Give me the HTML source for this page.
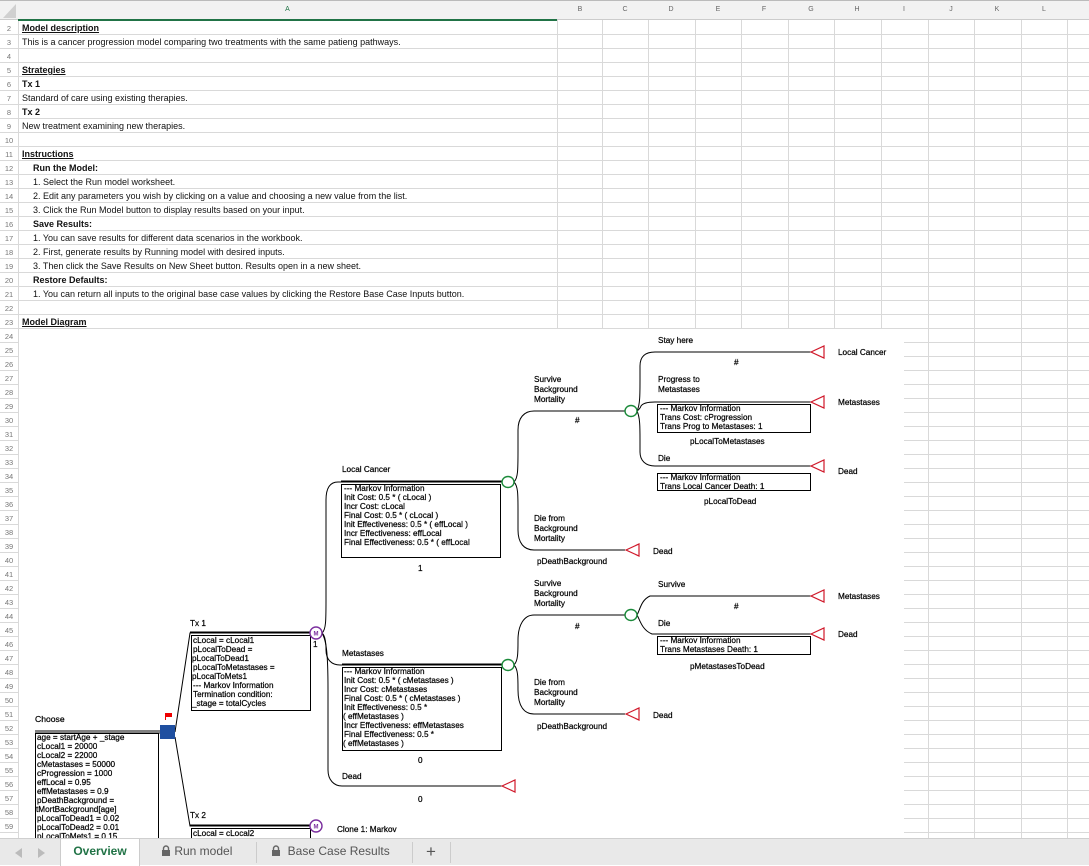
<!DOCTYPE html>
<html><head><meta charset="utf-8"><style>
*{margin:0;padding:0;box-sizing:border-box}
body{width:1089px;height:865px;overflow:hidden;background:#fff;position:relative;font-family:"Liberation Sans",sans-serif}
.grid{position:absolute;left:0;top:21px;width:1089px;height:817px;
background-image:repeating-linear-gradient(to bottom,transparent 0,transparent 13px,#d9d9d9 13px,#d9d9d9 14px);}
.vl{position:absolute;top:0;width:1px;height:838px;background:#d9d9d9}
.hdr{position:absolute;left:0;top:0;width:1089px;height:20px;background:#f2f2f2;border-top:1px solid #bbb;border-bottom:1px solid #ccc}
.hl{position:absolute;top:6px;font-size:7px;color:#666;width:46px;text-align:center}
.c{position:absolute;left:22px;font-size:9px;color:#111;white-space:nowrap;line-height:10px}
.b{font-weight:bold}.u{text-decoration:underline}
.tabs{position:absolute;left:0;top:838px;width:1089px;height:27px;background:#e9e9e9;border-top:1px solid #cfcfcf}
.tab{position:absolute;top:0;height:27px;font-size:12px;color:#555;line-height:25px}
</style></head><body>
<div class="grid"></div>
<div class="vl" style="left:18px"></div><div class="vl" style="left:557px"></div><div class="vl" style="left:602px"></div><div class="vl" style="left:648px"></div><div class="vl" style="left:695px"></div><div class="vl" style="left:741px"></div><div class="vl" style="left:788px"></div><div class="vl" style="left:834px"></div><div class="vl" style="left:881px"></div><div class="vl" style="left:928px"></div><div class="vl" style="left:974px"></div><div class="vl" style="left:1021px"></div><div class="vl" style="left:1067px"></div>
<div class="hdr"></div>
<div style="position:absolute;left:18px;top:19px;width:539px;height:2px;background:#217346"></div>
<svg style="position:absolute;left:0;top:0" width="18" height="20"><polygon points="16,4 16,18 3,18" fill="#d0d0d0"/></svg>
<div class="hl" style="left:18px;width:539px;color:#217346">A</div>
<div class="hl" style="left:557px">B</div><div class="hl" style="left:602px">C</div><div class="hl" style="left:648px">D</div><div class="hl" style="left:695px">E</div><div class="hl" style="left:741px">F</div><div class="hl" style="left:788px">G</div><div class="hl" style="left:834px">H</div><div class="hl" style="left:881px">I</div><div class="hl" style="left:928px">J</div><div class="hl" style="left:974px">K</div><div class="hl" style="left:1021px">L</div>

<div class="c b u" style="top:23px">Model description</div>
<div class="c" style="top:37px">This is a cancer progression model comparing two treatments with the same patieng pathways.</div>
<div class="c b u" style="top:65px">Strategies</div>
<div class="c b" style="top:79px">Tx 1</div>
<div class="c" style="top:93px">Standard of care using existing therapies.</div>
<div class="c b" style="top:107px">Tx 2</div>
<div class="c" style="top:121px">New treatment examining new therapies.</div>
<div class="c b u" style="top:149px">Instructions</div>
<div class="c b" style="top:163px;left:33px">Run the Model:</div>
<div class="c" style="top:177px;left:33px">1. Select the Run model worksheet.</div>
<div class="c" style="top:191px;left:33px">2. Edit any parameters you wish by clicking on a value and choosing a new value from the list.</div>
<div class="c" style="top:205px;left:33px">3. Click the Run Model button to display results based on your input.</div>
<div class="c b" style="top:219px;left:33px">Save Results:</div>
<div class="c" style="top:233px;left:33px">1. You can save results for different data scenarios in the workbook.</div>
<div class="c" style="top:247px;left:33px">2. First, generate results by Running model with desired inputs.</div>
<div class="c" style="top:261px;left:33px">3. Then click the Save Results on New Sheet button. Results open in a new sheet.</div>
<div class="c b" style="top:275px;left:33px">Restore Defaults:</div>
<div class="c" style="top:289px;left:33px">1. You can return all inputs to the original base case values by clicking the Restore Base Case Inputs button.</div>
<div class="c b u" style="top:317px">Model Diagram</div>

<svg style="position:absolute;left:0;top:0" width="1089" height="865" font-family="Liberation Sans,sans-serif">
<rect x="19" y="329" width="885" height="509" fill="#fff"/>
<g font-size="7.5" fill="#777" text-anchor="middle">
<text x="9" y="31">2</text><text x="9" y="45">3</text><text x="9" y="59">4</text><text x="9" y="73">5</text><text x="9" y="87">6</text><text x="9" y="101">7</text><text x="9" y="115">8</text><text x="9" y="129">9</text><text x="9" y="143">10</text><text x="9" y="157">11</text><text x="9" y="171">12</text><text x="9" y="185">13</text><text x="9" y="199">14</text><text x="9" y="213">15</text><text x="9" y="227">16</text><text x="9" y="241">17</text><text x="9" y="255">18</text><text x="9" y="269">19</text><text x="9" y="283">20</text><text x="9" y="297">21</text><text x="9" y="311">22</text><text x="9" y="325">23</text><text x="9" y="339">24</text><text x="9" y="353">25</text><text x="9" y="367">26</text><text x="9" y="381">27</text><text x="9" y="395">28</text><text x="9" y="409">29</text><text x="9" y="423">30</text><text x="9" y="437">31</text><text x="9" y="451">32</text><text x="9" y="465">33</text><text x="9" y="479">34</text><text x="9" y="493">35</text><text x="9" y="507">36</text><text x="9" y="521">37</text><text x="9" y="535">38</text><text x="9" y="549">39</text><text x="9" y="563">40</text><text x="9" y="577">41</text><text x="9" y="591">42</text><text x="9" y="605">43</text><text x="9" y="619">44</text><text x="9" y="633">45</text><text x="9" y="647">46</text><text x="9" y="661">47</text><text x="9" y="675">48</text><text x="9" y="689">49</text><text x="9" y="703">50</text><text x="9" y="717">51</text><text x="9" y="731">52</text><text x="9" y="745">53</text><text x="9" y="759">54</text><text x="9" y="773">55</text><text x="9" y="787">56</text><text x="9" y="801">57</text><text x="9" y="815">58</text><text x="9" y="829">59</text>
</g>
<g stroke="#000" stroke-width="1" fill="none">
<path d="M35 731H160M35 733H160"/>
<rect x="35.5" y="733.5" width="123" height="110"/>
<path d="M175 732L190 633H311M175 737L190 826H311"/>
<path d="M190 632H311M190 825H311"/>
<rect x="191.5" y="635.5" width="119" height="75"/>
<rect x="191.5" y="828.5" width="119" height="20"/>
<path d="M322 633C326 630 326 620 326 600V500C326 488 330 482 338 482H502"/>
<path d="M322 633C326 636 326 646 326 650C326 660 332 665 340 665H502"/>
<path d="M322 633C326 640 328 650 328 690V770C328 780 334 786 342 786H502"/>
<path d="M341 481H502"/><rect x="341.5" y="484.5" width="159" height="73"/>
<path d="M342 664H502"/><rect x="342.5" y="667.5" width="159" height="83"/>
<path d="M514 482C518 478 518 470 518 450V430C518 418 524 411 534 411H625"/>
<path d="M514 482C518 486 518 494 518 510V530C518 543 524 550 534 550H625"/>
<path d="M637 411C640 405 640 395 640 380V366C640 357 645 352 655 352H811"/>
<path d="M637 411C640 409 641 406 641 406C643 403 648 402 655 402H811"/>
<path d="M637 411C640 417 640 427 640 440V452C640 461 646 466 655 466H811"/>
<rect x="657.5" y="404.5" width="153" height="28"/>
<rect x="657.5" y="473.5" width="153" height="17"/>
<path d="M514 665C518 661 518 653 518 640C518 625 524 615 534 615H625"/>
<path d="M514 665C518 669 518 677 518 690C518 706 524 714 534 714H625"/>
<path d="M637 615C640 610 641 600 650 596H811"/>
<path d="M637 615C640 620 642 630 652 634H811"/>
<rect x="657.5" y="636.5" width="153" height="18"/>
</g>
<rect x="160" y="725" width="15" height="14" fill="#1f4fa0"/>
<rect x="165" y="713" width="7" height="4" fill="#e00"/><line x1="165.5" y1="713" x2="165.5" y2="720" stroke="#e00"/>
<g stroke="#7b2f9e" stroke-width="1.4" fill="#fff">
<circle cx="316" cy="633" r="6"/><circle cx="316" cy="826" r="6"/></g>
<g font-size="6" fill="#7b2f9e" font-weight="bold" text-anchor="middle"><text x="316" y="635.5">M</text><text x="316" y="828.5">M</text></g>
<g stroke="#1b8a3a" stroke-width="1.4" fill="#fff">
<ellipse cx="508" cy="482" rx="6" ry="5.5"/><ellipse cx="508" cy="665" rx="6" ry="5.5"/>
<ellipse cx="631" cy="411" rx="6" ry="5.5"/><ellipse cx="631" cy="615" rx="6" ry="5.5"/></g>
<g stroke="#d0182a" stroke-width="1.2" fill="#fff">
<polygon points="502,786 515,780 515,792"/>
<polygon points="626,550 639,544 639,556"/><polygon points="626,714 639,708 639,720"/>
<polygon points="811,352 824,346 824,358"/><polygon points="811,402 824,396 824,408"/><polygon points="811,466 824,460 824,472"/>
<polygon points="811,596 824,590 824,602"/><polygon points="811,634 824,628 824,640"/>
</g>
<g font-size="8.2" fill="#000" stroke="#000" stroke-width="0.22">
<text x="35" y="722" font-size="8.6">Choose</text>
<text x="37" y="740">age = startAge + _stage</text><text x="37" y="749">cLocal1 = 20000</text><text x="37" y="758">cLocal2 = 22000</text><text x="37" y="767">cMetastases = 50000</text><text x="37" y="776">cProgression = 1000</text><text x="37" y="785">effLocal = 0.95</text><text x="37" y="794">effMetastases = 0.9</text><text x="37" y="803">pDeathBackground =</text><text x="36" y="812">tMortBackground[age]</text><text x="37" y="821">pLocalToDead1 = 0.02</text><text x="37" y="830">pLocalToDead2 = 0.01</text><text x="37" y="839">pLocalToMets1 = 0.15</text>
<text x="190" y="626">Tx 1</text>
<text x="193" y="643">cLocal = cLocal1</text><text x="193" y="652">pLocalToDead =</text><text x="192" y="661">pLocalToDead1</text><text x="193" y="670">pLocalToMetastases =</text><text x="192" y="679">pLocalToMets1</text><text x="193" y="688">--- Markov Information</text><text x="193" y="697">Termination condition:</text><text x="192" y="706">_stage = totalCycles</text>
<text x="313" y="647">1</text>
<text x="190" y="818">Tx 2</text><text x="193" y="836">cLocal = cLocal2</text>
<text x="337" y="832">Clone 1: Markov</text>
<text x="342" y="472">Local Cancer</text>
<text x="344" y="491">--- Markov Information</text><text x="344" y="500">Init Cost: 0.5 * ( cLocal )</text><text x="344" y="509">Incr Cost: cLocal</text><text x="344" y="518">Final Cost: 0.5 * ( cLocal )</text><text x="344" y="527">Init Effectiveness: 0.5 * ( effLocal )</text><text x="344" y="536">Incr Effectiveness: effLocal</text><text x="344" y="545">Final Effectiveness: 0.5 * ( effLocal</text>
<text x="418" y="571">1</text>
<text x="342" y="656">Metastases</text>
<text x="344" y="674">--- Markov Information</text><text x="344" y="683">Init Cost: 0.5 * ( cMetastases )</text><text x="344" y="692">Incr Cost: cMetastases</text><text x="344" y="701">Final Cost: 0.5 * ( cMetastases )</text><text x="344" y="710">Init Effectiveness: 0.5 *</text><text x="343" y="719">( effMetastases )</text><text x="344" y="728">Incr Effectiveness: effMetastases</text><text x="344" y="737">Final Effectiveness: 0.5 *</text><text x="343" y="746">( effMetastases )</text>
<text x="418" y="763">0</text>
<text x="342" y="779">Dead</text><text x="418" y="802">0</text>
<text x="534" y="382">Survive</text><text x="534" y="392">Background</text><text x="534" y="402">Mortality</text><text x="575" y="423">#</text>
<text x="534" y="521">Die from</text><text x="534" y="531">Background</text><text x="534" y="541">Mortality</text>
<text x="653" y="554">Dead</text><text x="537" y="564">pDeathBackground</text>
<text x="658" y="343">Stay here</text><text x="734" y="365">#</text>
<text x="658" y="382">Progress to</text><text x="658" y="392">Metastases</text>
<text x="660" y="411">--- Markov Information</text><text x="660" y="420">Trans Cost: cProgression</text><text x="660" y="429">Trans Prog to Metastases: 1</text>
<text x="690" y="444">pLocalToMetastases</text><text x="658" y="461">Die</text>
<text x="660" y="480">--- Markov Information</text><text x="660" y="489">Trans Local Cancer Death: 1</text>
<text x="704" y="504">pLocalToDead</text>
<text x="838" y="355">Local Cancer</text><text x="838" y="405">Metastases</text><text x="838" y="474">Dead</text>
<text x="534" y="586">Survive</text><text x="534" y="596">Background</text><text x="534" y="606">Mortality</text><text x="575" y="629">#</text>
<text x="534" y="685">Die from</text><text x="534" y="695">Background</text><text x="534" y="705">Mortality</text>
<text x="653" y="718">Dead</text><text x="537" y="729">pDeathBackground</text>
<text x="658" y="587">Survive</text><text x="734" y="609">#</text><text x="658" y="626">Die</text>
<text x="660" y="643">--- Markov Information</text><text x="660" y="652">Trans Metastases Death: 1</text>
<text x="690" y="669">pMetastasesToDead</text>
<text x="838" y="599">Metastases</text><text x="838" y="637">Dead</text>
</g>
</svg>

<div class="tabs">
<svg style="position:absolute;left:12px;top:8px" width="36" height="12"><polygon points="10,1 3,6 10,11" fill="#bbb"/><polygon points="26,1 33,6 26,11" fill="#bbb"/></svg>
<div class="tab" style="left:60px;width:80px;background:#fff;color:#217346;font-weight:bold;text-align:center;border-left:1px solid #ccc;border-right:1px solid #ccc">Overview</div>
<div class="tab" style="left:161px"><svg width="10" height="11" style="vertical-align:-1px"><rect x="1" y="5" width="8" height="6" fill="#666"/><path d="M2.5 5V3.5a2.5 2.5 0 0 1 5 0V5" stroke="#666" stroke-width="1.4" fill="none"/></svg> Run model</div>
<div style="position:absolute;left:256px;top:3px;width:1px;height:21px;background:#ccc"></div>
<div class="tab" style="left:271px"><svg width="10" height="11" style="vertical-align:-1px"><rect x="1" y="5" width="8" height="6" fill="#666"/><path d="M2.5 5V3.5a2.5 2.5 0 0 1 5 0V5" stroke="#666" stroke-width="1.4" fill="none"/></svg> &nbsp;Base Case Results</div>
<div style="position:absolute;left:412px;top:3px;width:1px;height:21px;background:#ccc"></div>
<div class="tab" style="left:426px;font-size:17px;color:#555">+</div>
<div style="position:absolute;left:450px;top:3px;width:1px;height:21px;background:#ccc"></div>
</div>
</body></html>
